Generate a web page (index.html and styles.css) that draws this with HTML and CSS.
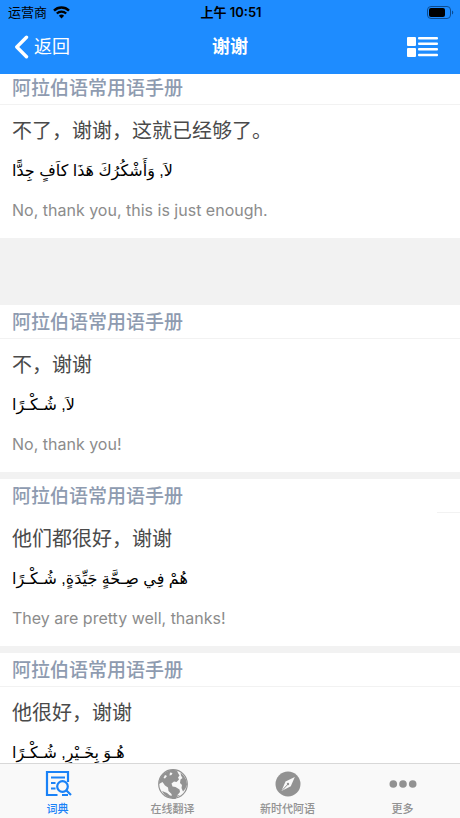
FILE: index.html
```
<!DOCTYPE html>
<html lang="zh-CN">
<head>
  <meta charset="UTF-8">
  <meta name="viewport" content="width=device-width, initial-scale=1">
  <title>谢谢</title>
  <link rel="stylesheet" href="styles.css">
</head>
<body>

<!-- === Header === -->
<header class="header">
  <div class="status">
    <div class="carrier">
      <span>运营商</span>
      <svg width="17" height="13" viewBox="0 0 17 13" fill="none" stroke="#000">
        <path d="M1 4.6a10.6 10.6 0 0 1 15 0" stroke-width="2.4"/>
        <path d="M3.8 7.6a6.6 6.6 0 0 1 9.4 0" stroke-width="2.2"/>
        <path d="M8.500 12.500L5.900 9.800a3.700 3.700 0 0 1 5.200 0z" fill="#000" stroke="none"/>
      </svg>
    </div>
    <time class="time">上午 10:51</time>
    <svg class="battery" width="27" height="13" viewBox="0 0 27 13">
      <rect x=".5" y=".5" width="23" height="12" rx="3.500" fill="none" stroke="#0b4c92"/>
      <rect x="2" y="2" width="16" height="9" rx="2" fill="#000"/>
      <path d="M25 4.500v4c1.700-.6 1.700-3.400 0-4z" fill="#0b4c92"/>
    </svg>
  </div>
  <div class="navbar">
    <button class="back">
      <svg width="15" height="24" viewBox="0 0 15 24" fill="none" stroke="#fff" stroke-width="3.400" stroke-linecap="round" stroke-linejoin="round">
        <path d="M12.500 2.200L2.800 12l9.700 9.800"/>
      </svg>
      <span>返回</span>
    </button>
    <h1>谢谢</h1>
    <button class="view-mode" aria-label="列表">
      <svg width="32" height="22" viewBox="0 0 32 22" fill="#fff">
        <rect x="0" y="1" width="9" height="9" rx="1"/>
        <rect x="0" y="12" width="9" height="9" rx="1"/>
        <rect x="11" y="1" width="20" height="2.400" rx="1"/>
        <rect x="11" y="6.500" width="20" height="2.400" rx="1"/>
        <rect x="11" y="12" width="20" height="2.400" rx="1"/>
        <rect x="11" y="17.800" width="20" height="2.400" rx="1"/>
      </svg>
    </button>
  </div>
</header>

<!-- === Phrase list === -->
<main class="list">
  <article class="card last-in-group">
    <h2>阿拉伯语常用语手册</h2>
    <div class="phrase">
      <p class="zh">不了，谢谢，这就已经够了。</p>
      <p class="ar" lang="ar" dir="rtl">لاَ, وَأَشْكُرُكَ هَذَا كاَفٍ جِدًّا</p>
      <p class="en" lang="en">No, thank you, this is just enough.</p>
    </div>
  </article>
  <article class="card">
    <h2>阿拉伯语常用语手册</h2>
    <div class="phrase">
      <p class="zh">不，谢谢</p>
      <p class="ar" lang="ar" dir="rtl">لاَ, شُـكْـرًا</p>
      <p class="en" lang="en">No, thank you!</p>
    </div>
  </article>
  <article class="card">
    <h2 class="short-line">阿拉伯语常用语手册</h2>
    <div class="phrase">
      <p class="zh">他们都很好，谢谢</p>
      <p class="ar" lang="ar" dir="rtl">هُمْ فِي صِـحَّةٍ جَيِّدَةٍ, شُـكْـرًا</p>
      <p class="en" lang="en">They are pretty well, thanks!</p>
    </div>
  </article>
  <article class="card">
    <h2>阿拉伯语常用语手册</h2>
    <div class="phrase">
      <p class="zh">他很好，谢谢</p>
      <p class="ar" lang="ar" dir="rtl">هُـوَ بِخَـيْرٍ, شُـكْـرًا</p>
    </div>
  </article>
</main>

<!-- === Tab bar === -->
<nav class="tabs">
  <a href="#dict" class="active">
    <svg width="30" height="30" viewBox="0 0 30 30" fill="none" stroke="currentColor" stroke-width="2.200">
      <path d="M14.500 26H4V3h21v10"/>
      <path d="M8 8.500h14M8 14h4.500M8 19.500h4.500"/>
      <circle cx="19.500" cy="17.500" r="5.300"/>
      <path d="M23.500 21.500l4.500 4.500M19 26h6"/>
    </svg>
    <span>词典</span>
  </a>
  <a href="#translate">
    <svg width="30" height="30" viewBox="0 0 30 30">
      <circle cx="15" cy="15" r="14.300" fill="#f7f7f7" stroke="currentColor" stroke-width="1.200"/>
      <path fill="currentColor" d="M10 2c3-1.500 6-1.500 9-.5l1 2.500 1.500 2.500-1.500 2 1 2-2.500 2.500-2.500-.5-2.500 2 1 3 3 .5 4 2.500.5 2.500-3 3.500-2 4.500-2.500-1-1-5-3-3-.5-3.500-3-2L4.500 13 1 15C1 9 4 4.500 10 2z"/>
      <path fill="#f7f7f7" d="M12 3.500l2.500.5-1 2-2 .5zM7 6l2 1-2 2.500-1.500-.5z"/>
      <path fill="currentColor" d="M22.500 3.500l3 3 2.500 4 1 5-1.500 4-2.500 3-1.500-3.500.5-3-2-2 .5-3.500 2-1.500-1.500-2.500zM4 22l5 2 3 2.500 4 .5 6-1c-4 3.500-9 4-13 1.500-2-1-4-3.500-5-5.500z"/>
    </svg>
    <span>在线翻译</span>
  </a>
  <a href="#news">
    <svg width="30" height="30" viewBox="0 0 30 30">
      <circle cx="15" cy="15" r="12.500" fill="currentColor"/>
      <path fill="#f9f9f9" d="M21.800 8l-9.300 4.500-4 9.500 9.300-4.700z"/>
      <path d="M9 21.500l5.200-5.500" stroke="currentColor"/>
      <circle cx="15" cy="15" r="1.200" fill="currentColor"/>
    </svg>
    <span>新时代阿语</span>
  </a>
  <a href="#more">
    <svg width="30" height="30" viewBox="0 0 30 30" fill="currentColor">
      <circle cx="5.300" cy="15" r="3.800"/>
      <circle cx="15" cy="15" r="3.800"/>
      <circle cx="24.700" cy="15" r="3.800"/>
    </svg>
    <span>更多</span>
  </a>
</nav>

</body>
</html>
```
FILE: styles.css
```
/* ===== Global Styles ===== */
* {
  margin: 0;
  padding: 0;
  box-sizing: border-box;
}
body {
  display: flex;
  flex-direction: column;
  height: 100vh;
  overflow: hidden;
  font-family: Inter, "Noto Sans CJK SC", sans-serif;
  background: #f2f2f2;
}
svg {
  display: block;
  flex: none;
}
button {
  display: flex;
  align-items: center;
  border: none;
  background: none;
  color: #fff;
  font: inherit;
  cursor: pointer;
}

/* ===== Header ===== */
.header {
  position: relative;
  z-index: 1;
  flex: none;
  background: #1e8cff;
  color: #fff;
}
.status {
  display: grid;
  grid-template-columns: 1fr auto 1fr;
  align-items: center;
  height: 24px;
  padding: 0 6px 0 8px;
  color: #000;
  font-size: 13px;
  line-height: 24px;
}
.carrier {
  display: flex;
  align-items: center;
  gap: 6px;
}
.time {
  font-weight: 600;
}
.battery {
  justify-self: end;
}
.navbar {
  display: grid;
  grid-template-columns: 1fr auto 1fr;
  align-items: center;
  height: 50px;
  padding: 0 14px 4px;
}
.back {
  gap: 5px;
  font-size: 18px;
  line-height: 28px;
}
.navbar h1 {
  font-size: 18px;
  line-height: 28px;
  font-weight: 600;
}
.view-mode {
  justify-self: end;
  padding-right: 7px;
}

/* ===== Phrase list ===== */
.list {
  flex: 1;
  min-height: 0;
  margin-top: -3px;
  overflow: hidden;
}
.card {
  margin-bottom: 7px;
  background: #fff;
}
.card.last-in-group {
  margin-bottom: 67px;
}
.card h2 {
  height: 34px;
  padding: 0 12px;
  border-bottom: 1px solid #f2f2f2;
  color: #8e9bb0;
  font-size: 19px;
  font-weight: 500;
  line-height: 36px;
}
.card h2.short-line {
  border-image: linear-gradient(to left, #f2f2f2 24px, transparent 24px) 1;
}
.phrase {
  display: flex;
  flex-direction: column;
  gap: 12px;
  padding: 12px 12px 15px;
}
.zh {
  color: #4a4a4a;
  font-size: 20px;
  line-height: 28px;
}
.ar {
  color: #000;
  font-family: "Liberation Sans", "DejaVu Sans", sans-serif;
  font-size: 16px;
  line-height: 28px;
  text-align: left;
}
.en {
  color: #8c8c8c;
  font-size: 16px;
  line-height: 26px;
}

/* ===== Tab bar ===== */
.tabs {
  position: relative;
  display: grid;
  grid-template-columns: repeat(4, 1fr);
  flex: none;
  border-top: 1px solid #d8d8d8;
  background: #f9f9f9;
}
.tabs a {
  display: flex;
  flex-direction: column;
  align-items: center;
  gap: 1px;
  padding-top: 5px;
  color: #929292;
  font-size: 11px;
  font-weight: 500;
  line-height: 18px;
  text-decoration: none;
}
.tabs a.active {
  color: #1a82f7;
}
```
